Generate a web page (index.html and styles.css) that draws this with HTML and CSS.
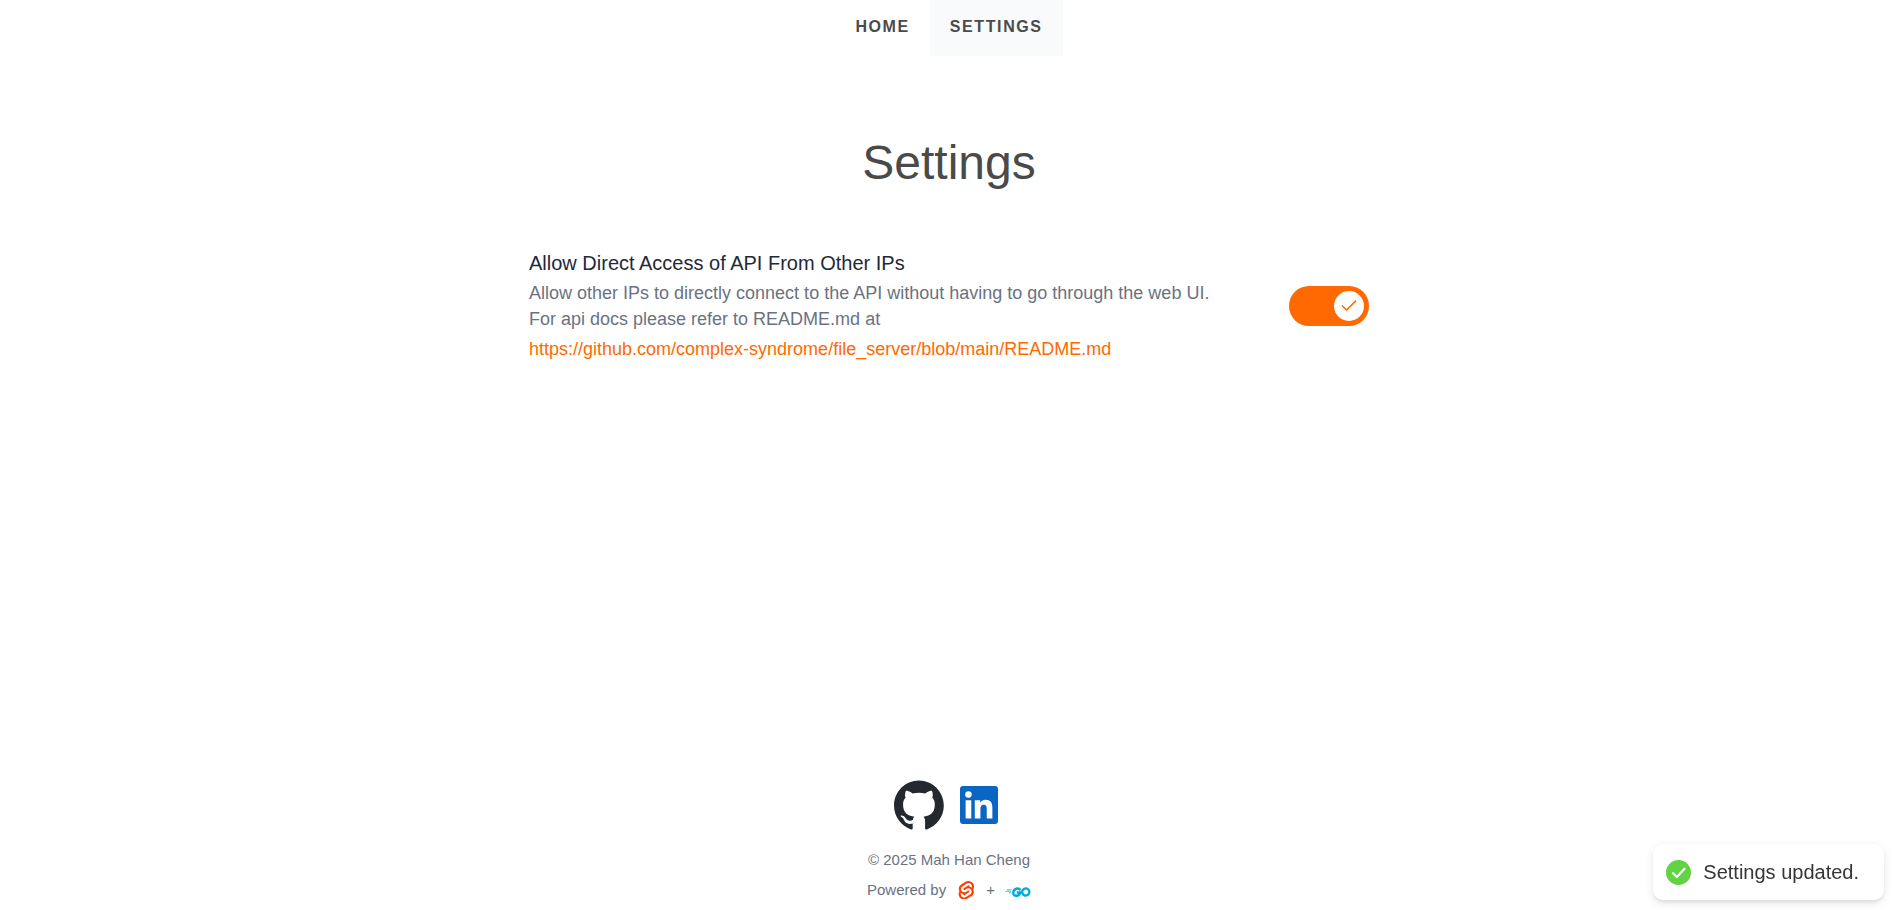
FILE: index.html
```html
<!DOCTYPE html>
<html lang="en">
<head>
<meta charset="utf-8">
<title>Settings</title>
<link rel="stylesheet" href="styles.css">
</head>
<body>
<div class="app">
  <nav class="nav">
    <a class="nav-link" href="#home">HOME</a>
    <a class="nav-link nav-link-active" href="#settings">SETTINGS</a>
  </nav>
  <main class="main">
    <h1 class="title">Settings</h1>
    <div class="setting">
      <div class="setting-text">
        <label class="setting-name" for="direct-access">Allow Direct Access of API From Other IPs</label>
        <p class="setting-desc">Allow other IPs to directly connect to the API without having to go through the web UI.<br>For api docs please refer to README.md at</p>
        <a class="setting-link" href="#readme">https://github.com/complex-syndrome/file_server/blob/main/README.md</a>
      </div>
      <span class="switch">
        <input class="switch-input" type="checkbox" id="direct-access" checked>
        <span class="switch-knob">
          <svg class="switch-check" viewBox="0 0 16 16" aria-hidden="true"><path d="M1 7.400 5.500 12 15 2.600"/></svg>
        </span>
      </span>
    </div>
  </main>
  <footer class="footer">
    <div class="social">
      <a class="social-link" href="#github" aria-label="GitHub">
        <svg class="github" viewBox="0 0 98 96"><path fill-rule="evenodd" clip-rule="evenodd" fill="#24292f" d="M48.854 0C21.839 0 0 22 0 49.217c0 21.756 13.993 40.172 33.405 46.69 2.427.49 3.316-1.059 3.316-2.362 0-1.141-.08-5.052-.08-9.127-13.59 2.934-16.42-5.867-16.42-5.867-2.184-5.704-5.42-7.17-5.42-7.17-4.448-3.015.324-3.015.324-3.015 4.934.326 7.523 5.052 7.523 5.052 4.367 7.496 11.404 5.378 14.235 4.074.404-3.178 1.699-5.378 3.074-6.6-10.839-1.141-22.243-5.378-22.243-24.283 0-5.378 1.94-9.778 5.014-13.2-.485-1.222-2.184-6.275.486-13.038 0 0 4.125-1.304 13.426 5.052a46.97 46.97 0 0 1 12.214-1.63c4.125 0 8.33.571 12.213 1.63 9.302-6.356 13.427-5.052 13.427-5.052 2.67 6.763.97 11.816.485 13.038 3.155 3.422 5.015 7.822 5.015 13.2 0 18.905-11.404 23.06-22.324 24.283 1.78 1.548 3.316 4.481 3.316 9.126 0 6.6-.08 11.897-.08 13.526 0 1.304.89 2.853 3.316 2.364 19.412-6.52 33.405-24.935 33.405-46.691C97.707 22 75.788 0 48.854 0z"/></svg>
      </a>
      <a class="social-link" href="#linkedin" aria-label="LinkedIn">
        <svg class="linkedin" viewBox="0 0 24 24"><path fill="#0a66c2" d="M20.447 20.452h-3.554v-5.569c0-1.328-.027-3.037-1.852-3.037-1.853 0-2.136 1.445-2.136 2.939v5.667H9.351V9h3.414v1.561h.046c.477-.9 1.637-1.85 3.37-1.85 3.601 0 4.267 2.37 4.267 5.455v6.286zM5.337 7.433a2.062 2.062 0 0 1-2.063-2.065 2.064 2.064 0 1 1 2.063 2.065zm1.782 13.019H3.555V9h3.564v11.452zM22.225 0H1.771C.792 0 0 .774 0 1.729v20.542C0 23.227.792 24 1.771 24h20.451C23.2 24 24 23.227 24 22.271V1.729C24 .774 23.2 0 22.222 0h.003z"/></svg>
      </a>
    </div>
    <p class="copyright">© 2025 Mah Han Cheng</p>
    <div class="powered">
      <span>Powered by</span>
      <svg class="svelte" viewBox="0 0 94 114" role="img" aria-label="Svelte"><path fill="#ff3e00" d="M91.8 15.6C80.9-.1 59.2-4.7 43.6 5.2L16.1 22.8C8.6 27.5 3.4 35.2 1.9 43.9c-1.3 7.3-.2 14.8 3.3 21.3-2.4 3.6-4 7.6-4.7 11.8-1.6 8.9.5 18.1 5.7 25.4 11 15.7 32.6 20.3 48.2 10.4l27.5-17.5c7.5-4.7 12.7-12.4 14.2-21.1 1.3-7.3.2-14.8-3.3-21.3 2.4-3.6 4-7.6 4.7-11.8 1.7-9-.4-18.2-5.7-25.5"/><path fill="#fff" d="M40.9 103.9c-8.9 2.3-18.2-1.2-23.4-8.7-3.2-4.4-4.4-9.9-3.5-15.3.2-.9.4-1.7.6-2.6l.5-1.6 1.4 1c3.3 2.4 6.9 4.2 10.8 5.4l1 .3-.1 1c-.1 1.4.3 2.9 1.1 4.1 1.6 2.3 4.4 3.4 7.1 2.7.6-.2 1.2-.4 1.7-.7L65.500 72c1.4-.9 2.300-2.200 2.600-3.800.3-1.600-.1-3.300-1-4.600-1.600-2.300-4.400-3.300-7.100-2.600-.6.2-1.200.4-1.700.7l-10.500 6.700c-1.700 1.100-3.600 1.900-5.600 2.400-8.900 2.300-18.200-1.200-23.400-8.700-3.100-4.400-4.400-9.900-3.400-15.300.9-5.200 4.100-9.900 8.600-12.700l27.500-17.500c1.700-1.100 3.600-1.900 5.600-2.500 8.900-2.300 18.200 1.200 23.400 8.700 3.200 4.400 4.400 9.900 3.500 15.300-.2.900-.4 1.700-.7 2.600l-.5 1.600-1.400-1c-3.300-2.400-6.900-4.200-10.800-5.400l-1-.3.1-1c.1-1.400-.3-2.900-1.100-4.100-1.600-2.300-4.400-3.300-7.100-2.600-.6.2-1.200.4-1.700.7L32.400 46.100c-1.400.9-2.300 2.200-2.600 3.800s.1 3.300 1 4.600c1.600 2.300 4.400 3.300 7.100 2.600.6-.2 1.200-.4 1.700-.7l10.500-6.700c1.700-1.100 3.600-1.900 5.600-2.500 8.900-2.300 18.200 1.200 23.400 8.700 3.200 4.400 4.400 9.900 3.500 15.300-.9 5.200-4.100 9.900-8.600 12.700l-27.500 17.500c-1.700 1.100-3.600 1.900-5.600 2.500"/></svg>
      <span class="plus">+</span>
      <svg class="go" viewBox="0 0 50 20" role="img" aria-label="Go"><g fill="none" stroke="#00acd7"><path stroke-width="1.500" d="M3 5.500h9M0 8.500h11M7 11.500h4"/><path stroke-width="4.800" d="M30 6.500C26 .5 16.500 3 15.500 11c-.5 8.500 12 9 14 0h-7"/><ellipse cx="40.500" cy="10" rx="7.200" ry="7" stroke-width="4.800" transform="rotate(-25 40.500 10)"/></g></svg>
    </div>
  </footer>
</div>
<div class="toast" role="status">
  <svg class="toast-icon" viewBox="0 0 25 25" aria-hidden="true"><circle cx="12.500" cy="12.500" r="12.500" fill="#61d345"/><path d="M7 13.200 10.800 17 18.500 8.800" fill="none" stroke="#fff" stroke-width="2.200" stroke-linecap="round" stroke-linejoin="round"/></svg>
  <span>Settings updated.</span>
</div>
</body>
</html>
```
FILE: styles.css
```css
*, *::before, *::after { box-sizing: border-box; }
body {
  margin: 0;
  background: #fff;
  color: #4a4a4a;
  font-family: "Liberation Sans", Arial, sans-serif;
}
a { text-decoration: none; }
h1, p { margin: 0; font-weight: 400; }
svg { display: block; }
.app {
  display: flex;
  flex-direction: column;
  min-height: 100vh;
  padding: 0 0 10px 6px;
}
.nav { display: flex; justify-content: center; }
.nav-link {
  padding: 15px 20px 17px;
  color: #4a4a4a;
  font-size: 16px;
  font-weight: 700;
  line-height: 24px;
  letter-spacing: 0.1em;
}
.nav-link-active { background: #f8fafc; }
.main {
  flex: 1;
  width: 100%;
  max-width: 840px;
  margin: 0 auto;
}
.title {
  margin: 79px 0 59px;
  font-size: 48px;
  line-height: 56px;
  text-align: center;
}
.setting {
  display: flex;
  align-items: center;
  justify-content: space-between;
  gap: 16px;
}
.setting-text { display: flex; flex-direction: column; align-items: flex-start; }
.setting-name { margin-bottom: 4px; color: #1e2939; font-size: 20px; line-height: 26px; }
.setting-desc { color: #6a7282; font-size: 18px; line-height: 26px; }
.setting-link { margin-top: 4px; color: #ff6900; font-size: 18px; line-height: 26px; }
.switch { position: relative; flex: none; width: 80px; height: 40px; }
.switch-input {
  appearance: none;
  display: block;
  width: 100%;
  height: 100%;
  margin: 0;
  border-radius: 20px;
  background: #d1d5dc;
  cursor: pointer;
}
.switch-input:checked { background: #ff6900; }
.switch-knob {
  position: absolute;
  top: 5px;
  right: 5px;
  display: grid;
  place-items: center;
  width: 30px;
  height: 30px;
  border-radius: 50%;
  background: #fff;
  pointer-events: none;
}
.switch-check {
  width: 16px;
  height: 16px;
  fill: none;
  stroke: #ff6900;
  stroke-width: 1.5;
}
.footer {
  display: flex;
  flex-direction: column;
  align-items: center;
  color: #6a7282;
  font-size: 15px;
  line-height: 20px;
}
.social { display: flex; align-items: center; gap: 16px; padding-right: 6px; }
.github { width: 50px; height: 50px; }
.linkedin { width: 38px; height: 38px; }
.copyright { margin: 20px 0 10px; }
.powered { display: flex; align-items: center; }
.svelte { width: 16px; height: 18px; margin: 0 12px; }
.go { width: 26px; height: 10px; margin: 4px 0 0 10px; }
.toast {
  position: fixed;
  right: 8px;
  bottom: 10px;
  display: flex;
  align-items: center;
  gap: 12px;
  padding: 14px 25px 14px 13px;
  border-radius: 10px;
  background: #fff;
  box-shadow: 0 3px 10px rgba(0, 0, 0, 0.1), 0 3px 3px rgba(0, 0, 0, 0.05);
  color: #363636;
  font-size: 20px;
  line-height: 28px;
}
.toast-icon { width: 25px; height: 25px; }
```
